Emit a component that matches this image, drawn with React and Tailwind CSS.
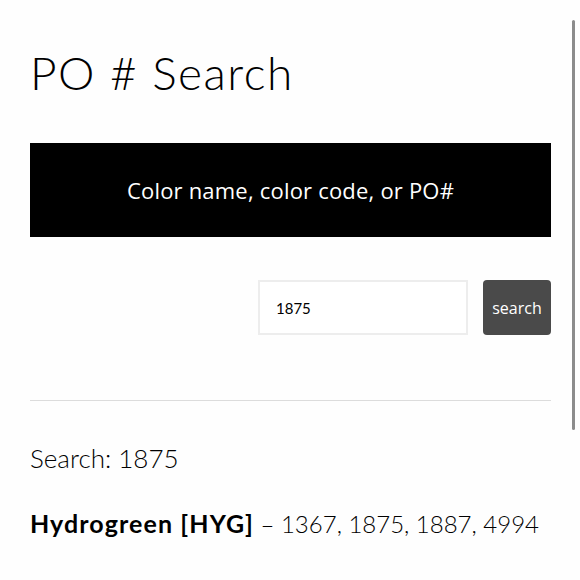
export default function App() {
  return (
    <div className="relative min-h-[580px] w-[580px] overflow-hidden bg-[#fefefe] text-black" style={{ fontFamily: "Lato, 'Open Sans', sans-serif" }}>
      <div className="pl-[30px] pr-[29px] pt-[45px]">
        <h1 className="text-[46px] font-light leading-[56px] tracking-[1.5px]">PO # Search</h1>

        <div className="mt-[42px] flex h-[94px] items-center justify-center bg-black">
          <span className="text-[22px] tracking-[0.2px] text-white" style={{ fontFamily: "'Open Sans', sans-serif" }}>
            Color name, color code, or PO#
          </span>
        </div>

        <form className="mt-[43px] flex justify-end gap-[15px]">
          <input
            defaultValue="1875"
            className="h-[55px] w-[210px] border-2 border-[#ededed] bg-white px-4 text-[15px] outline-none"
          />
          <button
            type="button"
            className="h-[55px] w-[68px] rounded-[4px] bg-[#4a4a4a] text-[16px] text-white"
            style={{ fontFamily: "'Open Sans', sans-serif" }}
          >
            search
          </button>
        </form>

        <hr className="mt-[65px] border-t border-[#dcdcdc]" />

        <p className="mt-[40px] text-[26px] font-light leading-[34px]">Search: 1875</p>

        <p className="mt-[32px] text-[24px] font-light leading-[32px]">
          <span className="text-[25px] font-bold tracking-[1.1px]">Hydrogreen [HYG]</span> – 1367, 1875, 1887, 4994
        </p>
      </div>

      {/* overlay scrollbar */}
      <div className="absolute right-[5px] top-[20px] h-[410px] w-[3px] rounded-full bg-[#8c8c8c]" />
    </div>
  );
}
